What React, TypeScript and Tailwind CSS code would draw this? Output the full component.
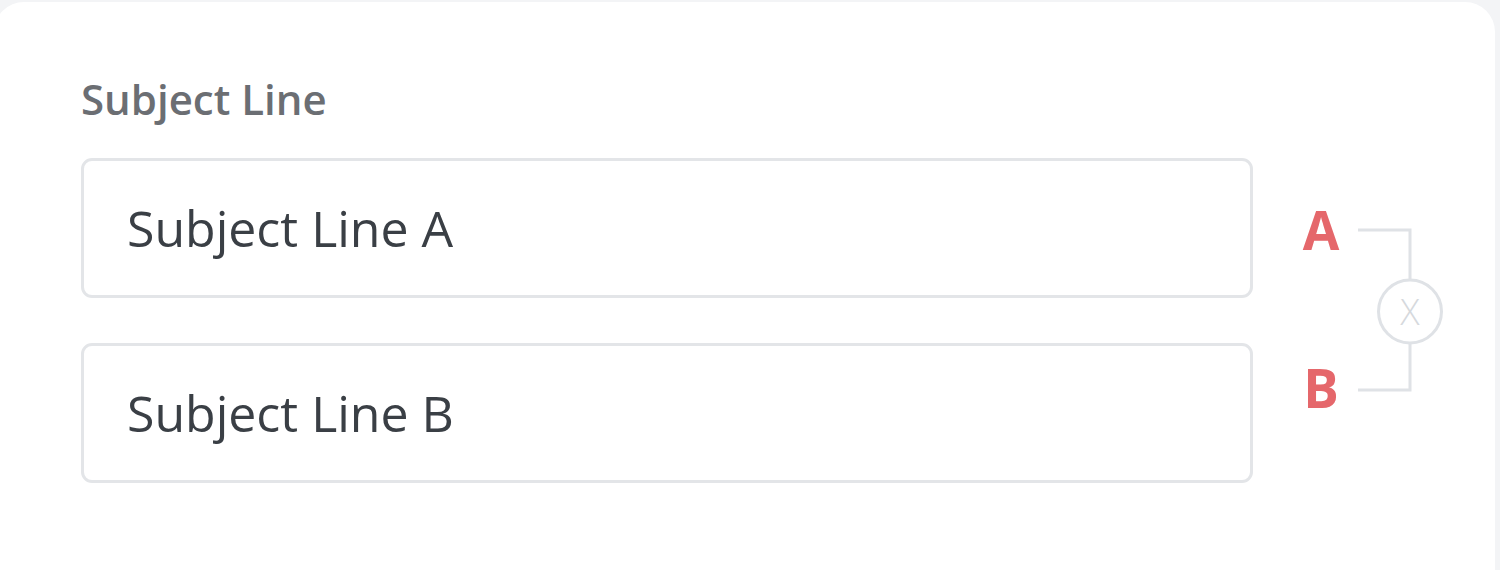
export default function App() {
  return (
    <main className="h-[570px] overflow-hidden bg-[#f3f4f6] pt-[2px] pr-[5px] font-['Open_Sans',sans-serif]">
      <div className="ml-[-6px] h-[640px] rounded-[30px] bg-white pl-[87px] pt-[76px]">
        <h2 className="mb-[38px] text-[42px] font-semibold leading-none text-[#6b6e73]">Subject Line</h2>

        <div className="flex items-start">
          <div className="flex w-[1172px] flex-col gap-[45px]">
            <div className="flex h-[140px] items-center rounded-[11px] border-[3px] border-[#e3e5e8] pl-[43px] text-[50px] leading-none text-[#3a3f45]">
              Subject Line A
            </div>
            <div className="flex h-[140px] items-center rounded-[11px] border-[3px] border-[#e3e5e8] pl-[43px] text-[50px] leading-none text-[#3a3f45]">
              Subject Line B
            </div>
          </div>

          <div className="ml-[48px] mt-[45px] flex items-start">
            <div className="flex h-[211px] w-[40px] flex-col items-center justify-between text-[53px] font-bold leading-none text-[#e5676b]">
              <span>A</span>
              <span>B</span>
            </div>
            <svg className="ml-[15px] mt-[22px]" width="92" height="170" viewBox="0 0 92 170" fill="none">
              <path d="M2 5 H54 V55" stroke="#dfe2e6" strokeWidth="3" />
              <path d="M2 165 H54 V118" stroke="#dfe2e6" strokeWidth="3" />
              <circle cx="54" cy="86.5" r="31.5" stroke="#dfe2e6" strokeWidth="3" />
              <text
                x="54"
                y="99.5"
                textAnchor="middle"
                fontSize="36"
                fontWeight="300"
                fill="#d6d9dd"
                fontFamily="'Open Sans', sans-serif"
              >
                X
              </text>
            </svg>
          </div>
        </div>
      </div>
    </main>
  )
}
